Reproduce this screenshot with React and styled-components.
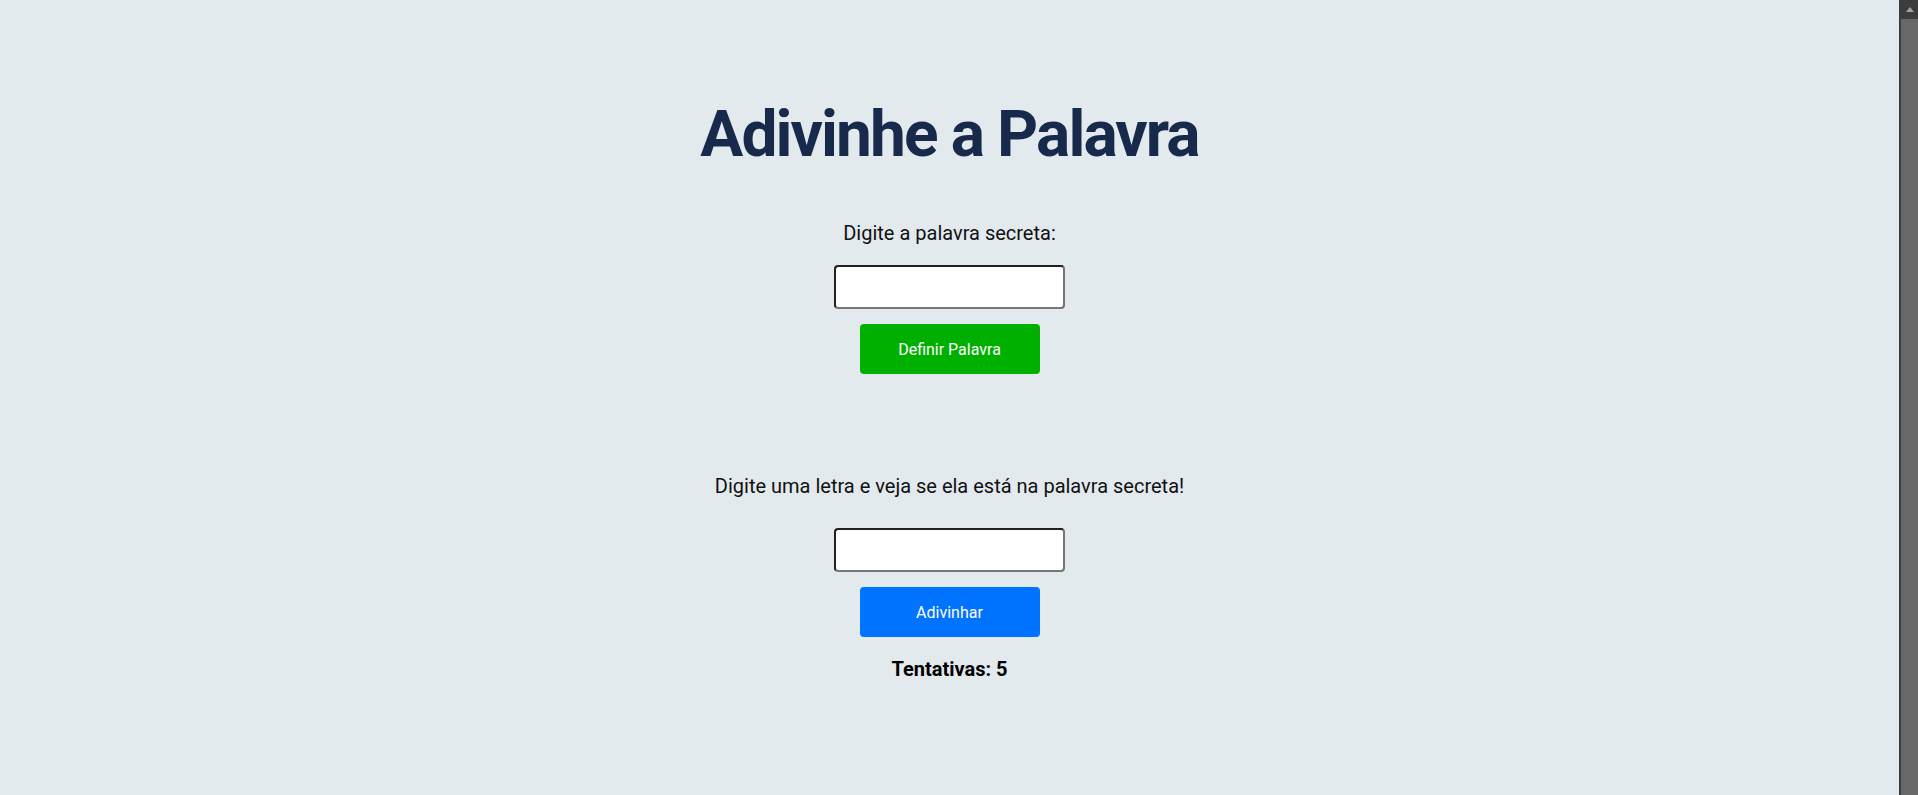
import styled, { createGlobalStyle } from 'styled-components';

const GlobalStyle = createGlobalStyle`
  body {
    margin: 0;
    background-color: #e2eaee;
    font-family: Roboto, "Liberation Sans", Arial, sans-serif;
    color: #111;
  }
`;

const Layout = styled.div`
  display: flex;
  height: 100vh;
  overflow: hidden;
`;

const Page = styled.main`
  flex: 1;
  display: flex;
  flex-direction: column;
  align-items: center;
  padding-top: 97px;
`;

const Title = styled.h1`
  margin: 0 0 49px;
  font-size: 64px;
  font-weight: 700;
  letter-spacing: -1.9px;
  line-height: normal;
  color: #182a4b;
`;

const Section = styled.section`
  display: flex;
  flex-direction: column;
  align-items: center;
  margin-bottom: ${(p) => p.$gapAfter || 0}px;
`;

const Label = styled.p`
  margin: 0 0 ${(p) => p.$space}px;
  font-size: 20px;
  line-height: normal;
  color: #111;
`;

const Input = styled.input`
  width: 231px;
  height: 44px;
  box-sizing: border-box;
  margin: 0 0 15px;
  padding: 8px 10px;
  font-size: 18px;
  background: #fff;
  border: 2px inset #767676;
  border-radius: 4px;
`;

const Button = styled.button`
  width: 180px;
  height: 50px;
  border: none;
  border-radius: 4px;
  background-color: ${(p) => (p.$variant === 'green' ? '#00b000' : '#0073ff')};
  color: #fff;
  font-family: Roboto, "Liberation Sans", Arial, sans-serif;
  font-size: 16px;
  cursor: pointer;
`;

const Attempts = styled.p`
  margin: 20px 0 0;
  font-size: 20px;
  font-weight: 700;
  line-height: normal;
  color: #000;
`;

// window scrollbar as seen in the screenshot
const ScrollTrack = styled.div`
  width: 19px;
  flex-shrink: 0;
  display: flex;
  flex-direction: column;
  background-color: #3c3c3c;
`;

const ScrollArrow = styled.div`
  height: 19px;
  display: flex;
  align-items: center;
  justify-content: center;
  padding-left: 2px;
  &::before {
    content: '';
    border-left: 4px solid transparent;
    border-right: 4px solid transparent;
    border-bottom: 5px solid #a3a3a3;
  }
`;

const ScrollThumb = styled.div`
  flex: 1;
  margin-left: 2px;
  background-color: #686868;
`;

function App() {
  return (
    <>
      <GlobalStyle />
      <Layout>
        <Page>
          <Title>Adivinhe a Palavra</Title>
          <Section $gapAfter={100}>
            <Label $space={20}>Digite a palavra secreta:</Label>
            <Input type="text" />
            <Button $variant="green">Definir Palavra</Button>
          </Section>
          <Section>
            <Label $space={30}>Digite uma letra e veja se ela está na palavra secreta!</Label>
            <Input type="text" maxLength={1} />
            <Button $variant="blue">Adivinhar</Button>
            <Attempts>Tentativas: 5</Attempts>
          </Section>
        </Page>
        <ScrollTrack>
          <ScrollArrow />
          <ScrollThumb />
        </ScrollTrack>
      </Layout>
    </>
  );
}

export default App;
